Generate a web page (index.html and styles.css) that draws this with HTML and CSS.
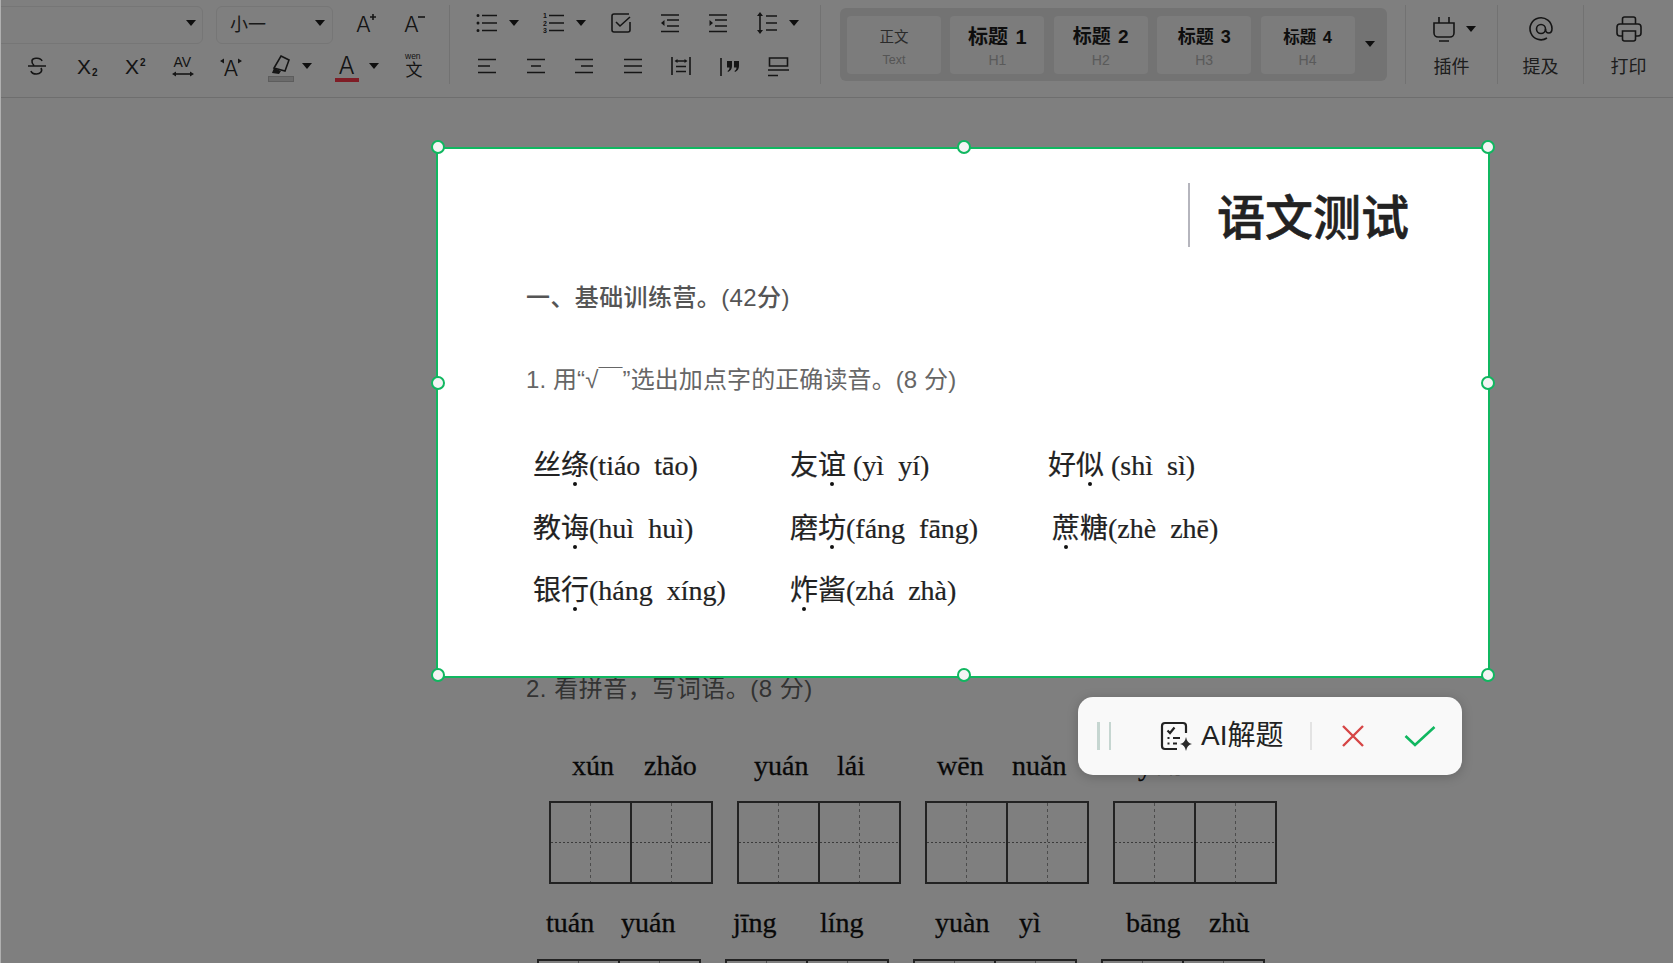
FILE: index.html
```html
<!DOCTYPE html>
<html lang="zh-CN">
<head>
    <meta charset="UTF-8">
    <meta name="viewport" content="width=device-width, initial-scale=1.0">
    <title>语文测试</title>
    <link rel="stylesheet" href="styles.css">
</head>
<body>
    <header class="toolbar">
        <div class="group group-text">
            <div class="row row-selects">
                <div class="select select-font"><i class="caret"></i></div>
                <div class="select select-size"><span>小一</span><i class="caret"></i></div>
                <svg class="icon" viewBox="0 0 32 32"><text class="glyph glyph-a" x="8" y="25">A</text><path d="M22 10h6M25 7v6"/></svg>
                <svg class="icon" viewBox="0 0 32 32"><text class="glyph glyph-a" x="8" y="25">A</text><path d="M22 10h7"/></svg>
            </div>
            <div class="row row-format">
                <svg class="icon" viewBox="0 0 32 32"><path d="M7 16h18M21 11c-1-3-9-4-10-.5-.5 2 .5 3.500 2 5M20 18c2 3.500-1 6-4.500 6-3 0-5-1-5.500-3"/></svg>
                <svg class="icon shift-r" viewBox="0 0 32 32"><text class="glyph glyph-x" x="5" y="24">X</text><text class="glyph glyph-sub" x="20" y="26">2</text></svg>
                <svg class="icon shift-r" viewBox="0 0 32 32"><text class="glyph glyph-x" x="5" y="24">X</text><text class="glyph glyph-sub" x="20" y="16">2</text></svg>
                <svg class="icon" viewBox="0 0 32 32"><text class="glyph glyph-av" x="6.500" y="17">AV</text><path d="M7 24h18"/><path class="solid" d="M5 24l4-2.500v5zM27 24l-4-2.500v5z"/></svg>
                <svg class="icon" viewBox="0 0 32 32"><text class="glyph glyph-a" x="8.500" y="26">A</text><path class="solid" d="M5 11l4-2.500v5zM27 11l-4-2.500v5z"/></svg>
                <div class="dropdown">
                    <span class="swatch-tool swatch-grey">
                        <svg class="icon" viewBox="0 0 32 32"><path d="M17 6l8 4-4 11-11-3z"/><path class="solid" d="M10 18l7 3-2 3-7-1z"/></svg>
                    </span>
                    <i class="caret"></i>
                </div>
                <div class="dropdown">
                    <span class="swatch-tool swatch-red">
                        <svg class="icon" viewBox="0 0 32 32"><text class="glyph glyph-color" x="7.500" y="24">A</text></svg>
                    </span>
                    <i class="caret"></i>
                </div>
                <svg class="icon icon-wen" viewBox="0 0 32 32"><text class="glyph glyph-wen" x="7" y="9">wen</text><text class="glyph glyph-wen-zh" x="7.500" y="26">文</text></svg>
            </div>
        </div>

        <div class="group group-para">
            <div class="row row-lists">
                <div class="dropdown">
                    <svg class="icon" viewBox="0 0 32 32"><path d="M11 8.500h15M11 16h15M11 23.500h15"/><path class="solid" d="M5.500 8.500a1.500 1.500 0 1 0 3 0 1.500 1.500 0 1 0-3 0M5.500 16a1.500 1.500 0 1 0 3 0 1.500 1.500 0 1 0-3 0M5.500 23.500a1.500 1.500 0 1 0 3 0 1.500 1.500 0 1 0-3 0"/></svg>
                    <i class="caret"></i>
                </div>
                <div class="dropdown">
                    <svg class="icon" viewBox="0 0 32 32"><path d="M11 8.500h15M11 16h15M11 23.500h15"/><text class="glyph glyph-num" x="5" y="11">1</text><text class="glyph glyph-num" x="5" y="18.500">2</text><text class="glyph glyph-num" x="5" y="26">3</text></svg>
                    <i class="caret"></i>
                </div>
                <svg class="icon" viewBox="0 0 32 32"><path d="M24 7H9a2 2 0 0 0-2 2v14a2 2 0 0 0 2 2h14a2 2 0 0 0 2-2v-8M11 15l4 4 10-9"/></svg>
                <svg class="icon" viewBox="0 0 32 32"><path d="M7 8h18M13 13h12M13 19h12M7 24.500h18"/><path class="solid" d="M7 16l3.500-3v6z"/></svg>
                <svg class="icon" viewBox="0 0 32 32"><path d="M7 8h18M13 13h12M13 19h12M7 24.500h18"/><path class="solid" d="M11 16l-3.500-3v6z"/></svg>
                <div class="dropdown">
                    <svg class="icon" viewBox="0 0 32 32"><path d="M9 8v16M15 9h11M15 16h11M15 23h11"/><path class="solid" d="M9 5l3 4H6zM9 27l3-4H6z"/></svg>
                    <i class="caret"></i>
                </div>
            </div>
            <div class="row row-align">
                <svg class="icon" viewBox="0 0 32 32"><path d="M7 9.500h18M7 16h12M7 22.500h18"/></svg>
                <svg class="icon" viewBox="0 0 32 32"><path d="M7 9.500h18M11 16h10M7 22.500h18"/></svg>
                <svg class="icon" viewBox="0 0 32 32"><path d="M7 9.500h18M13 16h12M7 22.500h18"/></svg>
                <svg class="icon" viewBox="0 0 32 32"><path d="M7 9.500h18M7 16h18M7 22.500h18"/></svg>
                <svg class="icon" viewBox="0 0 32 32"><path d="M7 7v18M25 7v18M11 11h10M11 16.500h10M11 21.500h10"/><path class="solid" d="M9.500 11l3-2v4zM22.500 11l-3-2v4z"/></svg>
                <svg class="icon" viewBox="0 0 32 32"><path d="M7 8v18"/><path class="solid" d="M13 11h5v5c0 3-1.500 5-4 6l-.500-1c1.500-.7 2-2 2-3.500h-2.500zM20 11h5v5c0 3-1.500 5-4 6l-.500-1c1.500-.7 2-2 2-3.500h-2.500z"/></svg>
                <svg class="icon" viewBox="0 0 32 32"><path d="M7.500 8h18v8h-18zM6 20h21M6 25.500h10"/></svg>
            </div>
        </div>

        <div class="group group-styles">
            <div class="style-panel">
                <div class="style-card style-text"><b>正文</b><small>Text</small></div>
                <div class="style-card style-h1"><b>标题 1</b><small>H1</small></div>
                <div class="style-card style-h2"><b>标题 2</b><small>H2</small></div>
                <div class="style-card style-h3"><b>标题 3</b><small>H3</small></div>
                <div class="style-card style-h4"><b>标题 4</b><small>H4</small></div>
                <i class="caret panel-caret"></i>
            </div>
        </div>

        <div class="group group-action action-plugin">
            <div class="action-icon">
                <svg class="icon" viewBox="0 0 32 32"><path d="M11 4v6M21 4v6M6 10h20v10a4 4 0 0 1-4 4H10a4 4 0 0 1-4-4zM11 28h10"/></svg>
                <i class="caret"></i>
            </div>
            <span>插件</span>
        </div>
        <div class="group group-action action-mention">
            <div class="action-icon">
                <svg class="icon" viewBox="0 0 32 32"><path d="M22 25a11 11 0 1 1 5-9.500c0 2.500-1 4.500-3.200 4.500S20.500 18 20.500 16"/><circle cx="16" cy="16" r="4.500"/></svg>
            </div>
            <span>提及</span>
        </div>
        <div class="group group-action action-print">
            <div class="action-icon">
                <svg class="icon" viewBox="0 0 32 32"><path d="M9.500 11V6a2 2 0 0 1 2-2h9a2 2 0 0 1 2 2v5M9 23H7a3 3 0 0 1-3-3v-6a3 3 0 0 1 3-3h18a3 3 0 0 1 3 3v6a3 3 0 0 1-3 3h-2M9.500 18h13v8a2 2 0 0 1-2 2h-9a2 2 0 0 1-2-2z"/></svg>
            </div>
            <span>打印</span>
        </div>
    </header>

    <main class="doc">
        <p class="doc-line">2. 看拼音，写词语。(8 分)</p>
        <div class="pinyin pinyin-a">
            <span>xún</span><span>zhǎo</span><span>yuán</span><span>lái</span><span>wēn</span><span>nuǎn</span><span>yǒu</span>
        </div>
        <div class="boxes boxes-a">
            <div class="box"><div class="cell"></div><div class="cell"></div></div>
            <div class="box"><div class="cell"></div><div class="cell"></div></div>
            <div class="box"><div class="cell"></div><div class="cell"></div></div>
            <div class="box"><div class="cell"></div><div class="cell"></div></div>
        </div>
        <div class="pinyin pinyin-b">
            <span>tuán</span><span>yuán</span><span>jīng</span><span>líng</span><span>yuàn</span><span>yì</span><span>bāng</span><span>zhù</span>
        </div>
        <div class="boxes boxes-b">
            <div class="box"><div class="cell"></div><div class="cell"></div></div>
            <div class="box"><div class="cell"></div><div class="cell"></div></div>
            <div class="box"><div class="cell"></div><div class="cell"></div></div>
            <div class="box"><div class="cell"></div><div class="cell"></div></div>
        </div>
    </main>

    <div class="mask"></div>

    <section class="crop">
        <div class="crop-title"><h1>语文测试</h1></div>
        <h2 class="crop-heading">一、基础训练营。(42分)</h2>
        <p class="crop-question">1. 用“√￣”选出加点字的正确读音。(8 分)</p>
        <div class="words">
            <div>丝<span class="dot">绦</span>(tiáo  tāo)</div>
            <div>友<span class="dot">谊</span> (yì  yí)</div>
            <div>好<span class="dot">似</span> (shì  sì)</div>
            <div>教<span class="dot">诲</span>(huì  huì)</div>
            <div>磨<span class="dot">坊</span>(fáng  fāng)</div>
            <div class="word-nudge"><span class="dot">蔗</span>糖(zhè  zhē)</div>
            <div>银<span class="dot">行</span>(háng  xíng)</div>
            <div><span class="dot">炸</span>酱(zhá  zhà)</div>
        </div>
        <i class="handle h-tl"></i><i class="handle h-tc"></i><i class="handle h-tr"></i>
        <i class="handle h-ml"></i><i class="handle h-mr"></i>
        <i class="handle h-bl"></i><i class="handle h-bc"></i><i class="handle h-br"></i>
    </section>

    <div class="popup">
        <div class="grip"><i></i><i></i></div>
        <div class="popup-action">
            <svg class="popup-icon" viewBox="0 0 32 30"><path d="M26 12V5a3 3 0 0 0-3-3H5a3 3 0 0 0-3 3v20a3 3 0 0 0 3 3h12M7.500 9.500L10 12l4.500-5.500M7.500 17h2M13 17h7M7.500 22.500h2M13 22.500h4"/><path class="solid" d="M26 16q1 6 6 7-5 1-6 7-1-6-6-7 5-1 6-7z"/></svg>
            <span>AI解题</span>
        </div>
        <i class="popup-sep"></i>
        <svg class="popup-cancel" viewBox="0 0 24 24"><path d="M2 2l20 20M22 2L2 22"/></svg>
        <svg class="popup-ok" viewBox="0 0 32 22"><path d="M1.500 11l9.500 9L30.500 2"/></svg>
    </div>
</body>
</html>
```

FILE: styles.css
```css
* {
    box-sizing: border-box;
}

html {
    background-color: #fff;
}

body {
    position: relative;
    width: 1673px;
    height: 963px;
    margin: 0;
    overflow: hidden;
    border-left: 1px solid #b0b0b0;
    background-color: #fff;
    font-family: "Liberation Sans", "Noto Sans CJK SC", sans-serif;
    color: #333;
}

/* toolbar */
.toolbar {
    display: flex;
    height: 98px;
    border-bottom: 1px solid #ddd;
    background-color: #fff;
}

.group {
    height: 79px;
    margin-top: 5px;
    border-right: 1px solid #e4e4e4;
}

.group-text {
    width: 449px;
}

.group-para {
    width: 371px;
    padding-left: 21px;
}

.group-styles {
    width: 585px;
    padding: 3px 0 0 19px;
}

.row {
    display: flex;
    align-items: center;
    height: 36px;
    gap: 16.5px;
}

.row + .row {
    margin-top: 7px;
}

.row-selects {
    gap: 0;
}

.row-selects .icon {
    margin-left: 15px;
}

.row-selects .icon:last-child {
    margin-left: 16px;
}

.row-format {
    padding-left: 20px;
}

.icon {
    display: block;
    flex: none;
    width: 32px;
    height: 32px;
    fill: none;
    stroke: #2a2a2a;
    stroke-width: 1.6;
}

.shift-r {
    transform: translateX(2px);
}

.solid {
    fill: #2a2a2a;
    stroke: none;
}

.glyph {
    fill: #2a2a2a;
    stroke: none;
    font-family: "Liberation Sans", "Noto Sans CJK SC", sans-serif;
}

.glyph-a {
    font-family: Inter, sans-serif;
    font-size: 22px;
    font-weight: 300;
}

.glyph-x {
    font-size: 21px;
}

.glyph-sub {
    font-size: 10px;
    font-weight: bold;
}

.glyph-av {
    font-size: 14px;
}

.glyph-color {
    font-family: Inter, sans-serif;
    font-size: 24px;
    font-weight: 300;
}

.glyph-wen {
    font-size: 8.5px;
}

.glyph-wen-zh {
    font-size: 17px;
}

.glyph-num {
    font-size: 7px;
    font-weight: bold;
}

.caret {
    display: block;
    flex: none;
    width: 0;
    height: 0;
    border-top: 6px solid #1f1f1f;
    border-left: 5px solid transparent;
    border-right: 5px solid transparent;
}

.dropdown {
    display: flex;
    align-items: center;
    gap: 6px;
    margin-right: 2.5px;
}

.swatch-tool {
    position: relative;
    display: block;
}

.swatch-tool::after {
    content: "";
    position: absolute;
    left: 4px;
    bottom: 0;
    width: 24px;
    height: 4px;
}

.swatch-grey::after {
    background-color: #d6d6d6;
    border: 1px solid #bbb;
}

.swatch-red::after {
    background-color: #ff3a4c;
}

.select {
    display: flex;
    align-items: center;
    justify-content: space-between;
    height: 38px;
    margin-top: 4px;
    padding: 0 7px 4px 13px;
    border: 1px solid #ececec;
    border-radius: 6px;
    font-size: 18px;
    color: #333;
}

.select-font {
    justify-content: flex-end;
    width: 210px;
    margin-left: -8px;
    margin-right: 13px;
    padding-right: 6px;
}

.select-size {
    width: 117px;
}

/* heading styles */
.style-panel {
    display: flex;
    align-items: center;
    gap: 9.4px;
    width: 547px;
    height: 73px;
    padding: 0 0 0 7px;
    border-radius: 6px;
    background-color: #e6e6e6;
}

.style-card {
    display: flex;
    flex-direction: column;
    align-items: center;
    justify-content: center;
    flex: none;
    width: 94px;
    height: 58px;
    padding-top: 3px;
    border-radius: 4px;
    background-color: #f8f8f8;
}

.style-card b {
    line-height: 28px;
    font-weight: bold;
    word-spacing: 2px;
    color: #1c1c1c;
    white-space: nowrap;
}

.style-card small {
    line-height: 18px;
    font-size: 14px;
    color: #b4b4b4;
}

.style-text b {
    font-size: 14.5px;
    font-weight: 400;
    color: #555;
}

.style-text small {
    font-size: 12.5px;
    color: #aaa;
}

.style-h1 b {
    font-size: 20px;
}

.style-h2 b {
    font-size: 19px;
}

.style-h3 b {
    font-size: 18px;
}

.style-h4 b {
    font-size: 16.5px;
}

.panel-caret {
    margin: -2px 0 0 1px;
}

.group-action {
    display: flex;
    flex-direction: column;
    align-items: center;
    font-size: 18px;
    color: #3a3a3a;
}

.action-icon {
    display: flex;
    align-items: center;
    gap: 6px;
    height: 47px;
}

.action-plugin {
    width: 92px;
}

.action-mention {
    width: 86px;
}

.action-print {
    flex: 1;
    border-right: none;
}

/* worksheet under the crop */
.doc {
    padding: 574px 0 0 525px;
}

.doc-line {
    margin: 0;
    line-height: 34px;
    font-size: 24px;
    letter-spacing: 0.5px;
    color: #666;
}

.pinyin {
    display: grid;
    height: 40px;
    line-height: 40px;
    font-family: "Liberation Serif", serif;
    font-size: 28px;
    color: #111;
    -webkit-text-stroke: 0.3px #111;
}

.pinyin-a {
    grid-template-columns: 72px 110px 83px 100px 75px 126px 82px;
    margin: 40px 0 0 46px;
}

.pinyin-b {
    grid-template-columns: 75px 112px 87px 115px 84px 107px 83px 60px;
    margin: 19px 0 0 20px;
}

.boxes {
    display: flex;
    gap: 24px;
}

.boxes-a {
    margin: 15px 0 0 23px;
}

.boxes-b {
    margin: 16px 0 0 11px;
}

.box {
    display: flex;
    flex: none;
    width: 164px;
    height: 83px;
    border: 2px solid #444;
}

.cell {
    flex: 1;
    background-image:
        linear-gradient(to right, #777 50%, transparent 0),
        linear-gradient(to bottom, #999 50%, transparent 0);
    background-size: 4px 1px, 1px 6px;
    background-position: 0 50%, 50% 0;
    background-repeat: repeat-x, repeat-y;
}

.cell + .cell {
    border-left: 2px solid #444;
}

/* dim layer and crop box */
.mask {
    position: absolute;
    inset: 0;
    z-index: 1;
    background-color: rgba(0, 0, 0, 0.5);
}

.crop {
    position: absolute;
    left: 435px;
    top: 147px;
    z-index: 2;
    width: 1054px;
    height: 531px;
    padding: 34px 0 0 88px;
    border: 2px solid #10b760;
    background-color: #fff;
}

.crop-title {
    display: flex;
    justify-content: flex-end;
    padding-right: 79px;
}

.crop-title h1 {
    height: 64px;
    margin: 0;
    padding-left: 27px;
    border-left: 2px solid #b5b5bd;
    line-height: 72px;
    font-size: 48px;
    font-weight: 500;
    color: #222;
    -webkit-text-stroke: 0.6px #222;
}

.crop-heading {
    margin: 34px 0 0;
    line-height: 34px;
    font-size: 24px;
    font-weight: 500;
    letter-spacing: 0.4px;
    color: #555;
}

.crop-question {
    margin: 48px 0 0;
    line-height: 34px;
    font-size: 24px;
    letter-spacing: 0.1px;
    color: #666;
}

.words {
    display: grid;
    grid-template-columns: 257px 258px 1fr;
    grid-auto-rows: 62.5px;
    margin: 38px 0 0 7px;
    line-height: 62.5px;
    font-family: "Liberation Serif", "Noto Sans CJK SC", serif;
    font-size: 28px;
    color: #222;
    white-space: pre;
    -webkit-text-stroke: 0.2px #222;
}

.word-nudge {
    padding-left: 4px;
}

.dot {
    position: relative;
}

.dot::after {
    content: "";
    position: absolute;
    left: 50%;
    top: 32px;
    width: 4px;
    height: 4px;
    margin-left: -2px;
    border-radius: 50%;
    background-color: #111;
}

.handle {
    position: absolute;
    width: 14px;
    height: 14px;
    border: 2.5px solid #10b760;
    border-radius: 50%;
    background-color: #f4f4f4;
}

.h-tl, .h-ml, .h-bl {
    left: -7px;
}

.h-tc, .h-bc {
    left: 519px;
}

.h-tr, .h-mr, .h-br {
    right: -7px;
}

.h-tl, .h-tc, .h-tr {
    top: -9px;
}

.h-ml, .h-mr {
    top: 227px;
}

.h-bl, .h-bc, .h-br {
    bottom: -6px;
}

/* floating action bar */
.popup {
    position: absolute;
    left: 1077px;
    top: 697px;
    z-index: 3;
    display: flex;
    align-items: center;
    width: 384px;
    height: 78px;
    padding-left: 19px;
    border-radius: 15px;
    background-color: #f9f9f9;
    box-shadow: 0 2px 12px rgba(0, 0, 0, 0.2);
}

.grip {
    display: flex;
    gap: 9px;
}

.grip i {
    width: 2.5px;
    height: 28px;
    background-color: #c6d6d1;
}

.popup-action {
    display: flex;
    align-items: center;
    gap: 9px;
    margin-left: 49px;
    font-size: 28px;
    color: #222;
}

.popup-action span {
    padding-bottom: 6px;
}

.popup-icon {
    width: 32px;
    height: 30px;
    fill: none;
    stroke: #222;
    stroke-width: 2.2;
}

.popup-sep {
    width: 2px;
    height: 28px;
    margin-left: 27px;
    background-color: #e3e3e3;
}

.popup-cancel {
    width: 24px;
    height: 24px;
    margin-left: 29px;
    fill: none;
    stroke: #d64545;
    stroke-width: 2.4;
}

.popup-ok {
    width: 32px;
    height: 22px;
    margin-left: 39px;
    fill: none;
    stroke: #10b760;
    stroke-width: 2.6;
}
```
